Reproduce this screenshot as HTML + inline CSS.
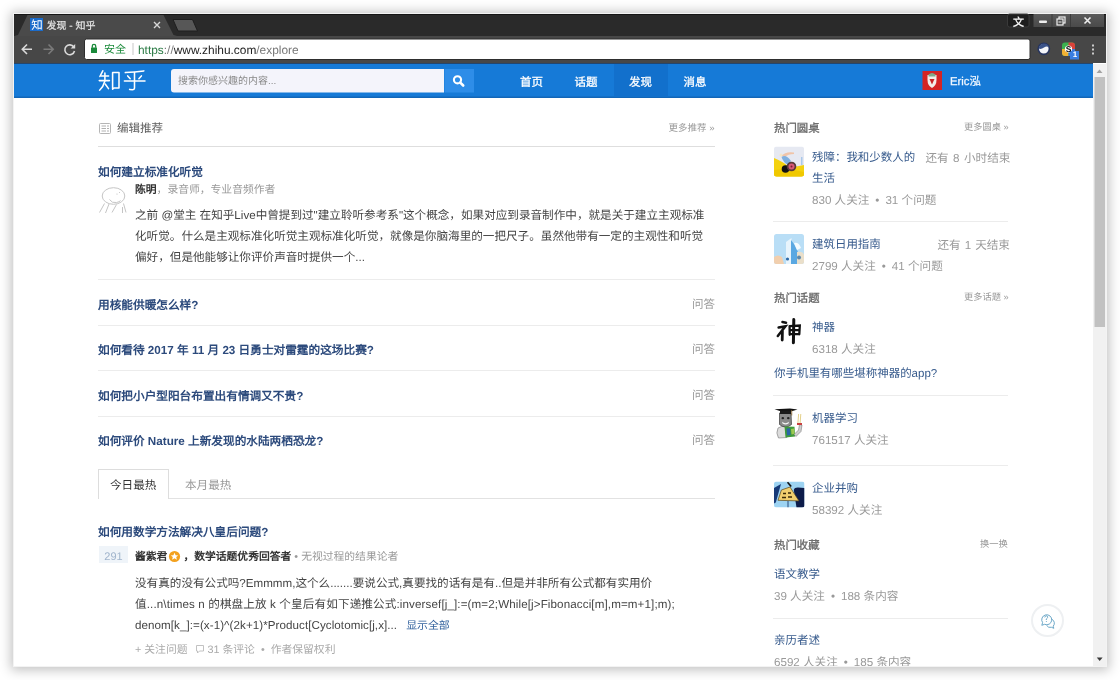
<!DOCTYPE html>
<html lang="zh-CN"><head><meta charset="utf-8">
<style>
*{box-sizing:border-box;margin:0;padding:0}
#clip{will-change:transform}
html,body{width:1120px;height:680px;overflow:hidden;background:#fff;font-family:"Liberation Sans",sans-serif;text-rendering:geometricPrecision}
.a{position:absolute;white-space:nowrap;line-height:19px}
#win{position:absolute;left:12.5px;top:12.5px;width:1094px;height:654px;border:1.5px solid #f3f3f3;box-shadow:0 1px 11px 2px rgba(0,0,0,.25)}
#clip{position:absolute;left:0;top:0;width:1106px;height:666px;overflow:hidden}
#tabs{position:absolute;left:14px;top:14px;width:1092px;height:22px;background:#242424}
#tb{position:absolute;left:14px;top:36px;width:1092px;height:28px;background:#474747}
#hdr{position:absolute;left:14px;top:64px;width:1079px;height:34px;background:#167ad7}
#sb{position:absolute;left:1093px;top:64px;width:13px;height:602px;background:#f1f1f1}
.q{color:#2c4a7c;font-weight:bold;font-size:11.67px}
.t{color:#365a8c;font-size:11.47px}
.g{color:#999;font-size:11.6px}
.h{color:#666;-webkit-text-stroke:0.3px #666;font-size:11.4px}
.m{color:#999;font-size:9.25px}
.d{font-style:normal;margin:0 6px}
.sep{position:absolute;height:1px;background:#ececec}
</style></head><body>
<div id="win"></div>
<div id="clip">
<svg class="a" style="left:0;top:0;line-height:0" width="1120" height="680" viewBox="0 0 1120 680">
<rect x="14" y="14" width="1092" height="22" fill="#2a2a2a"/>
<rect x="14" y="14" width="1092" height="1" fill="#161616"/>
<rect x="14" y="36" width="1092" height="27" fill="#474747"/>
<path d="M14.5 36 L18 35 L27.5 15 L163.5 15 L173.5 35 L177 36 Z" fill="#4a4a4a"/>
<path d="M173 19.5 L192.5 19.5 L197.5 31 L178 31 Z" fill="#575757" stroke="#1e1e1e" stroke-width="1"/>
<rect x="30" y="18" width="13" height="13" fill="#1b6ccb"/>
<path d="M154 22 L160 28 M160 22 L154 28" stroke="#d8d8d8" stroke-width="1.4"/>
<rect x="1007.5" y="14" width="21.5" height="13" rx="2" fill="#1d1d1d" stroke="#3a3a3a" stroke-width="1"/>
<defs><linearGradient id="wg" x1="0" y1="0" x2="0" y2="1"><stop offset="0" stop-color="#5a5a5a"/><stop offset="1" stop-color="#4a4a4a"/></linearGradient></defs><rect x="1033.5" y="14" width="70.5" height="13" fill="url(#wg)"/>
<rect x="1051.5" y="14" width="1" height="13" fill="#3c3c3c"/>
<rect x="1070" y="14" width="1" height="13" fill="#3c3c3c"/>
<rect x="1039" y="20.5" width="8" height="2.5" rx="1" fill="#eee"/>
<rect x="1059" y="17" width="6" height="6" fill="none" stroke="#eee" stroke-width="1.2"/>
<rect x="1057" y="19" width="6" height="6" fill="#505050" stroke="#eee" stroke-width="1.2"/><rect x="1058.5" y="21.5" width="3" height="1" fill="#eee"/>
<path d="M1084.5 17.5 L1090.5 23.5 M1090.5 17.5 L1084.5 23.5" stroke="#eee" stroke-width="1.6"/>
<path d="M32 49.3 L22.5 49.3 M27 44.5 L22.3 49.3 L27 54" fill="none" stroke="#d9d9d9" stroke-width="1.6"/>
<path d="M43.5 49.3 L53 49.3 M48.5 44.5 L53.2 49.3 L48.5 54" fill="none" stroke="#7a7a7a" stroke-width="1.6"/>
<path d="M73.8 47 A4.9 4.9 0 1 0 74.5 51" fill="none" stroke="#d9d9d9" stroke-width="1.6"/>
<path d="M75.2 44 L75.2 48.6 L70.6 48.6 Z" fill="#d9d9d9"/>
<rect x="84.5" y="39" width="945.5" height="20.5" rx="2" fill="#fff" stroke="#2e2e2e" stroke-width="1"/>
<rect x="91" y="47.5" width="6" height="5.5" rx="0.5" fill="#1a8a3a"/>
<path d="M92.3 47.8 L92.3 46 A1.7 1.7 0 0 1 95.7 46 L95.7 47.8" fill="none" stroke="#1a8a3a" stroke-width="1.3"/>
<rect x="132.5" y="43" width="1" height="12" fill="#c8c8c8"/>
<circle cx="1043.8" cy="48.8" r="5.6" fill="#f4f6fa" stroke="#26345e" stroke-width="1.6"/>
<path d="M1038.6 48.6 Q1039.5 43.8 1043.8 43.4 Q1048 43.6 1049.2 47.2 Q1046.5 45.8 1044 47.6 Q1041 49.8 1038.6 48.6 Z" fill="#3a5288"/>
<rect x="1062" y="42.5" width="13" height="13.5" rx="3" fill="#3cb04f"/>
<path d="M1068.5 42.5 L1072 42.5 A3 3 0 0 1 1075 45.5 L1075 49 L1068.5 49 Z" fill="#d9423a"/>
<path d="M1062 49 L1068.5 49 L1068.5 56 L1065 56 A3 3 0 0 1 1062 53 Z" fill="#f2b233"/>
<path d="M1068.5 49 L1075 49 L1075 56 L1068.5 56 Z" fill="#3b78d8"/>
<circle cx="1068.5" cy="49" r="3.6" fill="#fff"/>
<rect x="1070" y="51" width="9" height="8.5" fill="#3a7ee0"/>
<rect x="1092" y="44.5" width="2" height="2" fill="#ccc"/><rect x="1092" y="48.5" width="2" height="2" fill="#ccc"/><rect x="1092" y="52.5" width="2" height="2" fill="#ccc"/>
<rect x="14" y="63" width="1079" height="1" fill="#24466e"/>
<rect x="14" y="64" width="1079" height="34" fill="#167ad7"/>
<rect x="1093" y="64" width="13" height="602" fill="#f1f1f1"/>
<rect x="1094.5" y="77" width="10.5" height="250" fill="#c1c1c1"/>
<path d="M1096.5 73 L1099.5 69.5 L1102.5 73 Z" fill="#a3a3a3"/>
<path d="M1096.8 657.6 L1099.7 661 L1102.6 657.6 Z" fill="#3a3a3a"/>
</svg>
<div class="a" style="left:30.5px;top:19px;width:13px;height:13px;color:#fff;font-size:11.5px;line-height:14px;text-align:center">知</div>
<div class="a" style="left:46.5px;top:16.5px;color:#e6e6e6;font-size:10px;line-height:19px;-webkit-text-stroke:0.2px #e6e6e6">发现 - 知乎</div>
<div class="a" style="left:1008px;top:15.5px;width:21px;color:#f0f0f0;font-size:11px;line-height:15px;text-align:center;font-weight:bold">文</div>
<div class="a" style="left:104px;top:39.5px;color:#1a8a3a;font-size:11px;line-height:20px">安全</div>
<div class="a" style="left:138px;top:39.5px;color:#777;font-size:11.9px;line-height:20px"><span style="color:#2a7a44">https</span>://<span style="color:#222">www.zhihu.com</span>/explore</div>
<div class="a" style="left:1065px;top:43px;width:7px;color:#111;font-size:8.5px;line-height:12px;text-align:center;font-weight:bold">S</div>
<div class="a" style="left:1071px;top:50px;width:8px;color:#fff;font-size:8px;line-height:10px;text-align:center;font-weight:bold">1</div>

<svg class="a" style="left:0;top:0;line-height:0" width="1120" height="680" viewBox="0 0 1120 680">
<rect x="14" y="96.5" width="1079" height="1.5" fill="#1266b8"/>
<path d="M171 72 A3 3 0 0 1 174 69 L444 69 L444 92.5 L174 92.5 A3 3 0 0 1 171 89.5 Z" fill="#f4f4fb"/>
<rect x="444.5" y="69" width="29.5" height="23.5" fill="#2e8de8"/>
<circle cx="457.5" cy="79.8" r="3.6" fill="none" stroke="#fff" stroke-width="2.1"/>
<path d="M460.3 82.6 L463.2 85.5" stroke="#fff" stroke-width="2.6" stroke-linecap="round"/>
<rect x="614" y="64" width="54" height="32.5" fill="#1270cc"/>
<rect x="922.5" y="71" width="19.5" height="19" fill="#d42424"/>
<path d="M927.5 75 L936.5 75 L936.5 80 Q936.5 85.5 932 88 Q927.5 85.5 927.5 80 Z" fill="#f2eeea"/>
<path d="M928.5 74.5 Q932 71.5 935.5 74.5 L935.5 76.5 L928.5 76.5 Z" fill="#7faa8a"/>
<path d="M929.5 79 L934.5 79 L932 84.5 Z" fill="#c82222"/>
</svg>
<svg class="a" style="left:0;top:0;line-height:0" width="1120" height="680" viewBox="0 0 1120 680">
<g fill="none" stroke="#fff" stroke-width="1.55" stroke-linecap="round" stroke-linejoin="round">
<path d="M102.8 70.8 L99.9 76.5"/>
<path d="M101.2 76 L108.6 76"/>
<path d="M99.3 80.6 L109.4 80.6"/>
<path d="M104.9 73 L104.9 81 Q103.5 86.5 99.6 90.2"/>
<path d="M105.2 84 L108.5 88.6"/>
<path d="M112.6 72.4 L112.6 89.2 L114 88 L119 88 L119 72.4 Z"/>
<path d="M125.3 72.6 Q135 72 143.8 70.9"/>
<path d="M127.7 75.9 L130.2 78.7"/>
<path d="M141.4 75.9 L138.9 78.7"/>
<path d="M124.4 80.9 L145 80.9"/>
<path d="M134.5 72.4 L134.5 88.2 Q134.3 89.8 132.5 89.8 L129.6 89.4"/>
</g></svg>
<div class="a" style="left:178px;top:71.5px;color:#8a8a8a;font-size:10px;line-height:19px">搜索你感兴趣的内容...</div>
<div class="a" style="left:520px;top:74px;color:#fff;font-size:11.5px;-webkit-text-stroke:0.3px #fff">首页</div>
<div class="a" style="left:574.5px;top:74px;color:#fff;font-size:11.5px;-webkit-text-stroke:0.3px #fff">话题</div>
<div class="a" style="left:629px;top:74px;color:#fff;font-size:11.5px;-webkit-text-stroke:0.3px #fff">发现</div>
<div class="a" style="left:683.5px;top:74px;color:#fff;font-size:11.5px;-webkit-text-stroke:0.3px #fff">消息</div>
<div class="a" style="left:950px;top:73px;color:#eef6ff;font-size:11.3px;-webkit-text-stroke:0.3px #eef6ff">Eric泓</div>

<svg class="a" style="left:0;top:0;line-height:0" width="1120" height="680" viewBox="0 0 1120 680">
<!-- edit icon -->
<rect x="99.5" y="123.5" width="11" height="10" rx="1" fill="none" stroke="#b5b5b5" stroke-width="1"/>
<path d="M101.5 126 H106 M101.5 128.5 H106 M101.5 131 H106 M107 126 H109 M107 128.5 H109 M107 131 H109" stroke="#b0b0b0" stroke-width="1"/>
<!-- author sketch -->
<g fill="none" stroke="#c4c4c4" stroke-width="1">
<ellipse cx="113.5" cy="196" rx="11.3" ry="8.3"/>
<path d="M104.5 203.5 L99.5 212.5 M109 204 L105.5 213 M116.5 204.5 L112 212.5 M109.5 199.5 Q112 203.5 116.5 202.5 Q119.5 202 120.5 200.5 M123.5 203.5 L126 212.5 M122.5 207 L122.5 213"/>
</g>
<circle cx="117" cy="194" r="0.6" fill="#bbb"/><circle cx="119.5" cy="192.5" r="0.5" fill="#bbb"/>
<!-- badge -->
<circle cx="174.5" cy="556.5" r="5.6" fill="#f3a11e"/>
<path d="M174.5 552.8 L175.6 555.2 L178.2 555.4 L176.2 557.1 L176.9 559.7 L174.5 558.3 L172.1 559.7 L172.8 557.1 L170.8 555.4 L173.4 555.2 Z" fill="#fff"/>
<!-- roundtable 1 -->
<defs><clipPath id="c1"><rect x="774" y="146.5" width="30" height="30" rx="2.5"/></clipPath>
<clipPath id="c2"><rect x="774" y="234" width="30" height="30" rx="2.5"/></clipPath>
<clipPath id="c4"><rect x="774" y="481.5" width="30.5" height="26" rx="2.5"/></clipPath></defs>
<g clip-path="url(#c1)">
<rect x="774" y="146.5" width="30" height="30" fill="#e6e9f2"/>
<path d="M774 158 Q784 162 790 168 Q798 166 804 165 L804 177 L774 177 Z" fill="#f4d20f"/>
<path d="M774 170 Q790 168 804 172 L804 177 L774 177 Z" fill="#f0c800"/>
<path d="M781 156 Q786 151 794 152.5 L794 154 Q788 154 785 157 Z" fill="#f0c4a8"/>
<path d="M781.5 157 Q786 154 791 161 L788 165 Q783 162 781.5 157 Z" fill="#7fb0e0"/>
<circle cx="781" cy="155" r="1.5" fill="#f3e6c8"/>
<circle cx="785.5" cy="169" r="3.8" fill="#111"/>
<circle cx="791.5" cy="166.5" r="4.8" fill="#5a3a3a"/>
<circle cx="791.5" cy="166.5" r="3" fill="#d65a78"/>
<circle cx="791.5" cy="166.5" r="1" fill="#7a2030"/>
<rect x="801" y="157" width="1.5" height="8" fill="#a9c8ea"/>
</g>
<g clip-path="url(#c2)">
<rect x="774" y="234" width="30" height="30" fill="#b9def6"/>
<path d="M786 242 L791.5 238 L791.5 264 L786 264 Z" fill="#e8f4fc"/>
<path d="M791 240 L794 244 L798 252 L798 264 L791 264 Z" fill="#5aa8e2"/>
<path d="M794 243 Q799 242 801 248 L797 250 Z" fill="#f4fbff"/>
<path d="M774 257 Q778 254 782 257 L784 264 L774 264 Z" fill="#f1cfae"/>
<path d="M797 252 Q803 251 804 255 L804 264 L797 264 Z" fill="#eadfca"/>
<circle cx="799" cy="257.5" r="2" fill="#5d89ad"/>
<circle cx="787.5" cy="259" r="1.6" fill="#2d6aa8"/>
</g>
<!-- 神 -->
<g fill="none" stroke="#111" stroke-linecap="round">
<path d="M782.5 322 L786 322.7" stroke-width="2.6"/>
<path d="M778.6 327.6 L785.4 326.4 L777.8 336" stroke-width="2.5"/>
<path d="M782.4 331.5 L782.2 340" stroke-width="2.8"/>
<path d="M789.6 326.5 L789.7 334.8 M789.6 326.2 L799.8 325.5 L799.3 334.3 M789.9 330.2 L799.3 330 M789.9 334.2 L799.1 333.8" stroke-width="2.3"/>
<path d="M793.8 319.6 L793.4 342.8" stroke-width="3"/>
</g>
<!-- robot -->
<path d="M778 428 Q782 425.5 786 426.5 L787 437.5 L778.5 438 Q775.5 433 778 428 Z" fill="#dcdcdc" stroke="#777" stroke-width="0.6"/>
<path d="M779.5 413 Q785 410.5 791 413 L791.5 424.5 Q785.5 429.5 779.5 424.5 Z" fill="#8a8a8a" stroke="#3a3a3a" stroke-width="0.7"/>
<path d="M774.5 409.2 L790 408.4 L797.5 409.6 L786 413 Z" fill="#111"/>
<rect x="780" y="410.5" width="11" height="3.5" fill="#1a1a1a"/>
<ellipse cx="782.8" cy="418.2" rx="1.3" ry="1.1" fill="#222"/><ellipse cx="788.3" cy="418.2" rx="1.3" ry="1.1" fill="#222"/>
<path d="M782 421.8 Q785.5 424.5 789 421.8 L788.5 423.5 Q785.5 425.5 782.5 423.5 Z" fill="#f4f4f4"/>
<rect x="791.3" y="410" width="0.9" height="5.5" fill="#8a6a3a"/>
<path d="M784.5 426.5 L794.5 426.8 L795 436.5 L785.5 437.5 Z" fill="#3e9a3a"/>
<path d="M786.5 428.5 L790 428.3 L790.5 435 L787 435.5 Z" fill="#2a64a8"/>
<path d="M791 429 L794 428.5 L794.5 434 L791.5 434.5 Z" fill="#9cc850"/>
<path d="M794 434.5 L798.5 430 L799.5 424.5 L802 425 L801 431.5 L796 436.5 Z" fill="#cfcfcf" stroke="#666" stroke-width="0.5"/>
<path d="M797.8 424.5 L798.6 414 M800 424.5 L800.8 414" stroke="#e4d08a" stroke-width="1"/>
<rect x="797" y="423" width="5" height="2" fill="#c84040"/>
<!-- M&A -->
<g clip-path="url(#c4)">
<rect x="774" y="481.5" width="30.5" height="26" fill="#9dd3f2"/>
<path d="M774 488 L781 484 L775.8 502.5 L774 503.5 Z" fill="#173a78"/>
<path d="M793.8 490 Q794.5 487.5 798 487.6 L804.5 488 L804.5 507.5 L796.5 507.5 Z" fill="#0d1c4a"/>
<path d="M781.4 490 L790 487 L799 500.9 L778 500.3 Z" fill="#f1cf6e" stroke="#5a4518" stroke-width="0.7"/>
<path d="M783 493.5 H786 M788 493 H791 M782 497.5 H786 M788 497 H792" stroke="#3a2a08" stroke-width="1.3"/>
<path d="M787.5 482.3 L791.2 486.6" stroke="#111" stroke-width="1.6"/>
<rect x="787.5" y="501" width="1" height="6.5" fill="#2a4a7a"/>
</g>
<!-- feedback button -->
<circle cx="1047.5" cy="620.5" r="15.5" fill="#fff" stroke="#eef0f2" stroke-width="2"/>
<g fill="none" stroke="#5c9ec2" stroke-width="0.9" stroke-linejoin="round">
<path d="M1051.9 619.3 A4.4 4.4 0 0 1 1053.2 626.2 L1053.8 628.3 L1051.5 627.3 A4.4 4.4 0 0 1 1046.6 625.4"/>
<path d="M1042.6 622.6 A5 5 0 1 1 1044.6 624.3 L1041.8 625.3 Z" fill="#fff"/>
<path d="M1044.8 617.4 Q1045 615.7 1046.4 615.8 Q1048 616 1047.6 617.5 Q1047.3 618.4 1046.3 619 L1046.3 620"/>
</g>
<circle cx="1046.3" cy="621.6" r="0.5" fill="#5c9ec2"/>
<!-- footer icons -->
<path d="M196.5 645.5 H203.5 V651 H199.5 L197.5 653 V651 H196.5 Z" fill="none" stroke="#bbb" stroke-width="0.9"/>
</svg>

<!-- left column -->
<div class="a h" style="left:117px;top:120px;font-size:11.5px;-webkit-text-stroke:0;color:#5e5e5e">编辑推荐</div>
<div class="a m" style="left:668.5px;top:118.5px;font-size:9.5px">更多推荐 »</div>
<div class="sep" style="left:98px;top:146px;width:617px;background:#dedede"></div>

<div class="a q" style="left:98px;top:163px">如何建立标准化听觉</div>
<div class="a" style="left:135px;top:181px;font-size:10.8px;color:#999"><b style="color:#333">陈明</b>，录音师，专业音频作者</div>
<div class="a" style="left:135px;top:205px;font-size:11.6px;color:#444;line-height:21.1px">之前 @堂主 在知乎Live中曾提到过"建立聆听参考系"这个概念，如果对应到录音制作中，就是关于建立主观标准<br>化听觉。什么是主观标准化听觉主观标准化听觉，就像是你脑海里的一把尺子。虽然他带有一定的主观性和听觉<br>偏好，但是他能够让你评价声音时提供一个...</div>
<div class="sep" style="left:98px;top:279px;width:617px"></div>

<div class="a q" style="left:98px;top:296px">用核能供暖怎么样?</div>
<div class="a g" style="left:692px;top:296px;font-size:11.5px">问答</div>
<div class="sep" style="left:98px;top:325px;width:617px"></div>
<div class="a q" style="left:98px;top:341px">如何看待 2017 年 11 月 23 日勇士对雷霆的这场比赛?</div>
<div class="a g" style="left:692px;top:341px;font-size:11.5px">问答</div>
<div class="sep" style="left:98px;top:370px;width:617px"></div>
<div class="a q" style="left:98px;top:387px">如何把小户型阳台布置出有情调又不贵?</div>
<div class="a g" style="left:692px;top:387px;font-size:11.5px">问答</div>
<div class="sep" style="left:98px;top:416px;width:617px"></div>
<div class="a q" style="left:98px;top:432px">如何评价 Nature 上新发现的水陆两栖恐龙?</div>
<div class="a g" style="left:692px;top:432px;font-size:11.5px">问答</div>

<div class="a" style="left:98px;top:469px;width:71px;height:30px;border:1px solid #ddd;border-bottom:none;background:#fff;z-index:2"></div>
<div class="sep" style="left:98px;top:498px;width:617px;background:#e2e2e2"></div>
<div class="a" style="left:110px;top:476px;font-size:11.6px;color:#333;z-index:3">今日最热</div>
<div class="a" style="left:185px;top:476px;font-size:11.6px;color:#999">本月最热</div>

<div class="a q" style="left:98px;top:523px">如何用数学方法解决八皇后问题?</div>
<div class="a" style="left:99px;top:545.5px;width:29px;height:17.5px;background:#eff4f9;color:#a0b4cc;font-size:11px;text-align:center;line-height:22px">291</div>
<div class="a" style="left:135px;top:548px;font-size:10.8px;color:#999"><b style="color:#333">酱紫君</b><span style="display:inline-block;width:11px;height:11px;vertical-align:-1px;margin:0 2px 0 3px"></span><b style="color:#333">，数学话题优秀回答者</b><i class="d" style="margin:0 3px">•</i>无视过程的结果论者</div>
<div class="a" style="left:135px;top:573px;font-size:11.6px;color:#444;line-height:21.1px">没有真的没有公式吗?Emmmm,这个么.......要说公式,真要找的话有是有..但是并非所有公式都有实用价<br><span style="letter-spacing:0.12px">值...n\times n 的棋盘上放 k 个皇后有如下递推公式:inversef[j_]:=(m=2;While[j&gt;Fibonacci[m],m=m+1];m);</span><br><span style="letter-spacing:0.07px">denom[k_]:=(x-1)^(2k+1)*Product[Cyclotomic[j,x]...</span><span style="display:inline-block;width:9px"></span><span style="color:#33629e;font-size:10.9px">显示全部</span></div>
<div class="a" style="left:135px;top:641px;font-size:10.8px;color:#aaa">+ 关注问题<span style="display:inline-block;width:20px"></span>31 条评论 &nbsp;• &nbsp;作者保留权利</div>

<!-- right column -->
<div class="a h" style="left:774px;top:120px">热门圆桌</div>
<div class="a m" style="left:964px;top:118px">更多圆桌 »</div>
<div class="a t" style="left:812px;top:149px">残障：我和少数人的</div>
<div class="a g" style="left:925.5px;top:149px;word-spacing:1.2px">还有 8 小时结束</div>
<div class="a t" style="left:812px;top:170px">生活</div>
<div class="a g" style="left:812px;top:191px">830 人关注<i class="d">•</i>31 个问题</div>
<div class="sep" style="left:773px;top:221px;width:235px"></div>
<div class="a t" style="left:812px;top:236px">建筑日用指南</div>
<div class="a g" style="left:937.5px;top:236px;word-spacing:0.8px">还有 1 天结束</div>
<div class="a g" style="left:812px;top:257px">2799 人关注<i class="d">•</i>41 个问题</div>

<div class="a h" style="left:774px;top:290px">热门话题</div>
<div class="a m" style="left:964px;top:288px">更多话题 »</div>
<div class="a t" style="left:812px;top:319px">神器</div>
<div class="a g" style="left:812px;top:340px">6318 人关注</div>
<div class="a t" style="left:774px;top:365px">你手机里有哪些堪称神器的app?</div>
<div class="sep" style="left:773px;top:395px;width:235px"></div>
<div class="a t" style="left:812px;top:410px">机器学习</div>
<div class="a g" style="left:812px;top:431px">761517 人关注</div>
<div class="sep" style="left:773px;top:465px;width:235px"></div>
<div class="a t" style="left:812px;top:480px">企业并购</div>
<div class="a g" style="left:812px;top:501px">58392 人关注</div>

<div class="a h" style="left:774px;top:537px">热门收藏</div>
<div class="a m" style="left:980px;top:535px">换一换</div>
<div class="a t" style="left:774px;top:566px">语文教学</div>
<div class="a g" style="left:774px;top:587px">39 人关注<i class="d">•</i>188 条内容</div>
<div class="sep" style="left:773px;top:618px;width:235px"></div>
<div class="a t" style="left:774px;top:632px">亲历者述</div>
<div class="a g" style="left:774px;top:653px">6592 人关注<i class="d">•</i>185 条内容</div>
</div>
</body></html>
